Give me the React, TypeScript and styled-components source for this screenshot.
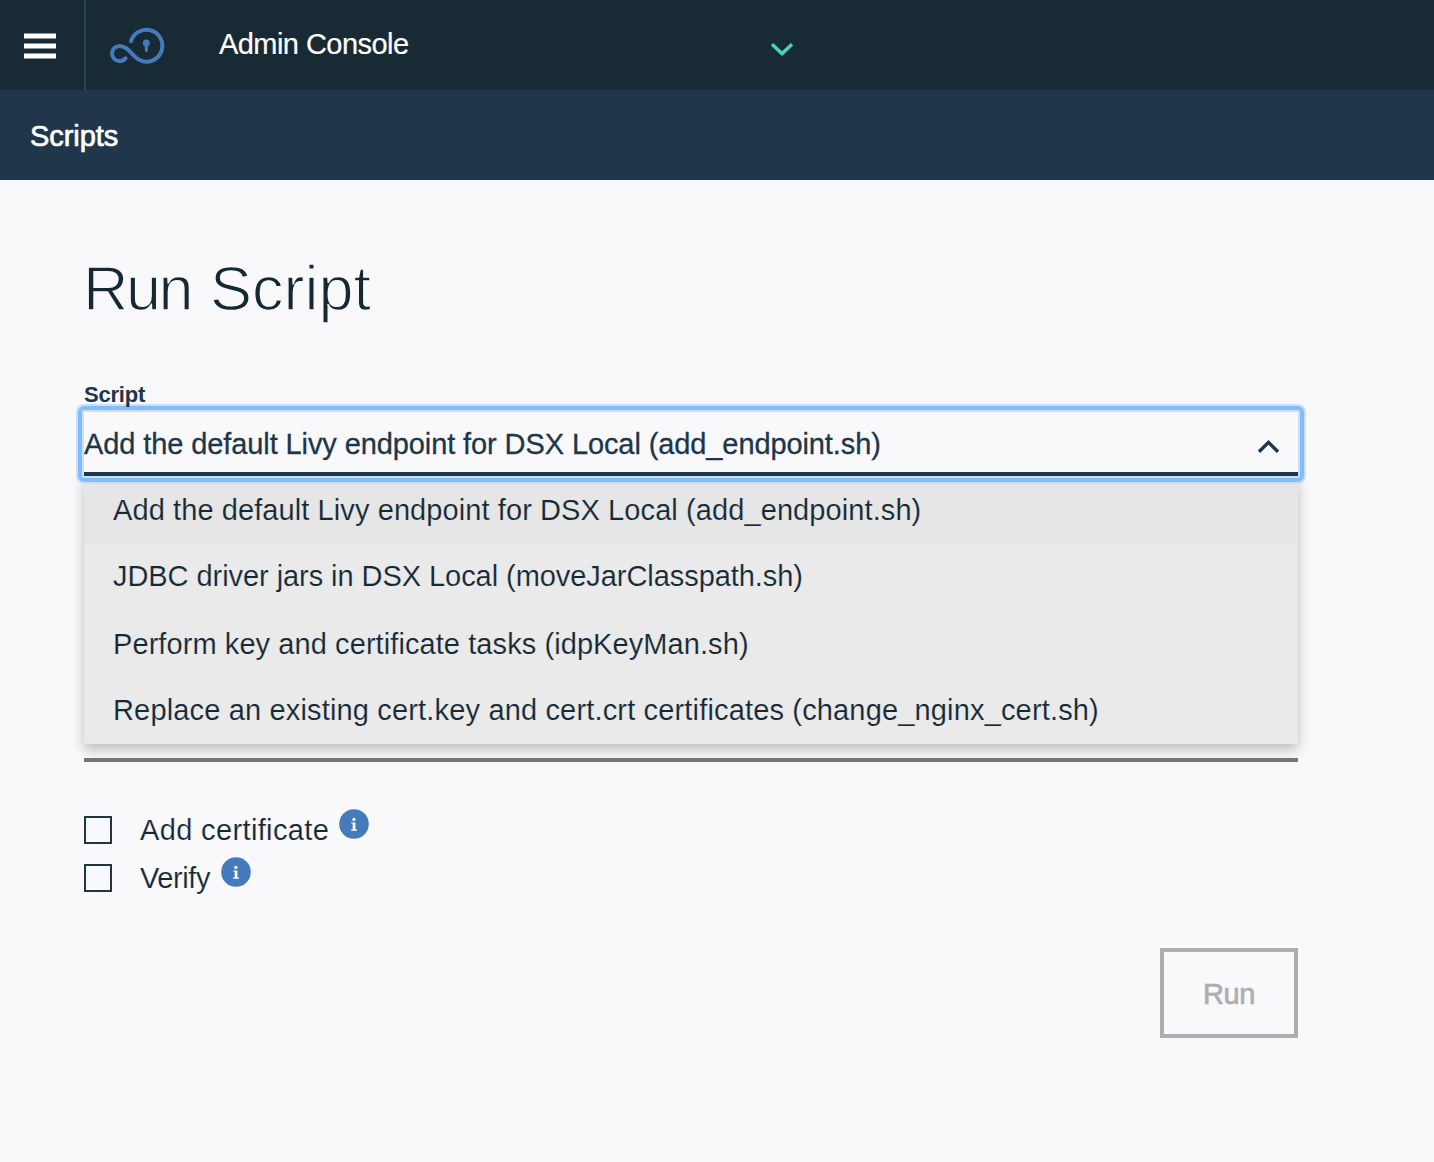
import React, { useState } from 'react';
import styled, { createGlobalStyle } from 'styled-components';

const color = {
  header: '#182a34',
  bar: '#20364b',
  page: '#f9f9fc',
  ink: '#152935',
  navy: '#1d3649',
  blue: '#457abd',
  teal: '#41d6c3',
  list: '#eaeaea',
  listActive: '#e6e6e6',
  disabled: '#aeaeae',
  ring: '#84bcfa',
  ringSoft: '#c9e0fa',
};

const GlobalStyle = createGlobalStyle`
  * { box-sizing: border-box; }
  body {
    margin: 0;
    min-height: 100vh;
    background: ${color.page};
    color: ${color.ink};
    font-family: "Liberation Sans", Arial, sans-serif;
    font-size: 29px;
    line-height: 32px;
  }
`;

const Header = styled.header`
  display: flex;
  align-items: flex-start;
  height: 90px;
  background: ${color.header};
  color: #fff;
`;

const MenuButton = styled.button`
  width: 86px;
  height: 90px;
  padding: 0;
  border: 0;
  border-right: 2px solid #28475d;
  background: transparent;
  display: flex;
`;

const Brand = styled.div`
  display: flex;
  width: 133px;
  padding: 24px 0 0 20px;
`;

const ProductName = styled.div`
  width: 551px;
  padding-top: 28px;
  white-space: nowrap;
  letter-spacing: -0.55px;
  -webkit-text-stroke: 0.2px #fff;
`;

const HeaderToggle = styled.div`
  display: flex;
  padding-top: 38px;
`;

const SubHeader = styled.div`
  height: 90px;
  padding: 30px 30px 0;
  background: ${color.bar};
  color: #fff;
  letter-spacing: -0.05px;
  -webkit-text-stroke: 0.7px #fff;
`;

const Main = styled.main`
  width: 1298px;
  padding: 72px 0 0 84px;
`;

const Title = styled.h1`
  display: flex;
  gap: 19px;
  margin: 0 0 0 -1px;
  height: 128px;
  font-size: 63px;
  font-weight: 400;
  line-height: 72px;
  -webkit-text-stroke: 1.4px ${color.page};
`;

const TitleWord = styled.span<{ $spacing: number }>`
  letter-spacing: ${(p) => p.$spacing}px;
`;

const FieldLabel = styled.label`
  display: block;
  position: relative;
  z-index: 3;
  height: 32px;
  padding-top: 2px;
  color: ${color.navy};
  font-size: 22px;
  font-weight: 700;
  line-height: 26px;
  letter-spacing: -0.2px;
`;

const Select = styled.div`
  position: relative;
  height: 64px;
`;

const SelectValue = styled.div`
  position: relative;
  z-index: 2;
  display: flex;
  justify-content: space-between;
  height: 64px;
  padding: 16px 18px 0 0;
  border-bottom: 4px solid ${color.navy};
  background: ${color.page};
  color: ${color.navy};
  letter-spacing: -0.1px;
  -webkit-text-stroke: 0.3px ${color.navy};

  svg {
    margin-top: 8px;
  }

  &::after {
    content: '';
    position: absolute;
    inset: -6px -6px -10px;
    border: 4px solid ${color.ring};
    border-radius: 6px;
    box-shadow: 0 0 0 2px ${color.ringSoft}, inset 0 0 0 2px ${color.ringSoft};
    pointer-events: none;
  }
`;

const OptionList = styled.ul`
  position: absolute;
  z-index: 1;
  top: 64px;
  left: 0;
  right: 0;
  margin: 0;
  padding: 0;
  list-style: none;
  background: ${color.list};
  box-shadow: 0 6px 12px rgba(0, 0, 0, 0.24);
`;

const Option = styled.li<{ $active: boolean; $spacing: number }>`
  height: 66px;
  padding: 16px 29px 0;
  background: ${(p) => (p.$active ? color.listActive : color.list)};
  letter-spacing: ${(p) => p.$spacing}px;
  white-space: nowrap;
  -webkit-text-stroke: 0.15px ${(p) => (p.$active ? color.listActive : color.list)};

  &:nth-child(odd) {
    height: 68px;
    padding-top: 18px;
  }
`;

const HiddenField = styled.div`
  position: relative;
  height: 286px;
  border-bottom: 4px solid #777678;
`;

const Checks = styled.div`
  padding-top: 54px;
`;

const CheckRow = styled.div`
  display: flex;
  height: 48px;
`;

const Box = styled.span`
  width: 28px;
  height: 28px;
  margin-right: 28px;
  border: 2px solid ${color.navy};
`;

const CheckLabel = styled.span<{ $spacing: number; $width: number }>`
  width: ${(p) => p.$width}px;
  margin-top: -2px;
  letter-spacing: ${(p) => p.$spacing}px;
  white-space: nowrap;
  -webkit-text-stroke: 0.15px ${color.page};
`;

const InfoBadge = styled.span`
  display: flex;
  height: 30px;
  margin: -7px 0 0 10px;
`;

const Actions = styled.div`
  display: flex;
  justify-content: flex-end;
  padding-top: 36px;
`;

const RunButton = styled.button`
  width: 138px;
  height: 90px;
  padding: 2px 0 0;
  border: 4px solid ${color.disabled};
  background: transparent;
  color: ${color.disabled};
  font: inherit;
  letter-spacing: -0.4px;
  -webkit-text-stroke: 0.7px ${color.disabled};
`;

const MenuIcon = () => (
  <svg width="84" height="90" viewBox="0 0 84 90" fill="#fff">
    <rect x="24" y="33.5" width="32" height="5" />
    <rect x="24" y="43.5" width="32" height="5" />
    <rect x="24" y="53.5" width="32" height="5" />
  </svg>
);

const LogoIcon = () => (
  <svg width="64" height="44" viewBox="106 24 64 44" fill="none" stroke={color.blue} strokeLinecap="round">
    <path
      strokeWidth="4"
      d="M131 41.3 A16 16 0 1 1 146.5 61.8 C141 61.8 137 59 133.6 55.4 C128.6 50.2 125.5 45.9 119.6 45.9 A7.6 7.6 0 0 0 119.6 61.1 C122 61.1 124 60.2 125.5 58.4"
    />
    <circle cx="146.3" cy="43" r="3.5" fill={color.blue} stroke="none" />
    <path strokeWidth="3" d="M146.3 44 V50.4" />
  </svg>
);

const Chevron = ({ up, stroke }: { up?: boolean; stroke: string }) => (
  <svg width="24" height="22" viewBox="0 0 24 22" fill="none" stroke={stroke} strokeWidth="3.4">
    <path d={up ? 'M3 15.8 L12.5 6.4 L22 15.8' : 'M2 6.2 L12 15.6 L22 6.2'} />
  </svg>
);

const InfoIcon = () => (
  <svg width="30" height="30" viewBox="0 0 30 30">
    <circle cx="15" cy="15" r="14.8" fill={color.blue} />
    <g fill="#fff">
      <circle cx="14.9" cy="10.4" r="1.6" />
      <path d="M12.2 13.4 H16.4 V20.6 H18 V21.8 H12.1 V20.6 H13.7 V14.6 H12.2 Z" />
    </g>
  </svg>
);

const scripts = [
  { name: 'Add the default Livy endpoint for DSX Local (add_endpoint.sh)', spacing: 0.09 },
  { name: 'JDBC driver jars in DSX Local (moveJarClasspath.sh)', spacing: -0.06 },
  { name: 'Perform key and certificate tasks (idpKeyMan.sh)', spacing: 0.08 },
  { name: 'Replace an existing cert.key and cert.crt certificates (change_nginx_cert.sh)', spacing: 0.16 },
];

const checks = [
  { label: 'Add certificate', spacing: 0.36, width: 189 },
  { label: 'Verify', spacing: -0.4, width: 71 },
];

export default function App() {
  const [selected, setSelected] = useState(0);
  return (
    <>
      <GlobalStyle />
      <Header>
        <MenuButton aria-label="Menu">
          <MenuIcon />
        </MenuButton>
        <Brand>
          <LogoIcon />
        </Brand>
        <ProductName>Admin Console</ProductName>
        <HeaderToggle>
          <Chevron stroke={color.teal} />
        </HeaderToggle>
      </Header>
      <SubHeader>Scripts</SubHeader>
      <Main>
        <Title>
          <TitleWord $spacing={-2.5}>Run</TitleWord>
          <TitleWord $spacing={0}>Script</TitleWord>
        </Title>
        <FieldLabel>Script</FieldLabel>
        <Select>
          <SelectValue>
            <span>{scripts[selected].name}</span>
            <Chevron up stroke={color.navy} />
          </SelectValue>
          <OptionList>
            {scripts.map((s, i) => (
              <Option key={s.name} $active={i === selected} $spacing={s.spacing} onClick={() => setSelected(i)}>
                {s.name}
              </Option>
            ))}
          </OptionList>
        </Select>
        <HiddenField />
        <Checks>
          {checks.map((c) => (
            <CheckRow key={c.label}>
              <Box />
              <CheckLabel $spacing={c.spacing} $width={c.width}>{c.label}</CheckLabel>
              <InfoBadge>
                <InfoIcon />
              </InfoBadge>
            </CheckRow>
          ))}
        </Checks>
        <Actions>
          <RunButton disabled>Run</RunButton>
        </Actions>
      </Main>
    </>
  );
}
